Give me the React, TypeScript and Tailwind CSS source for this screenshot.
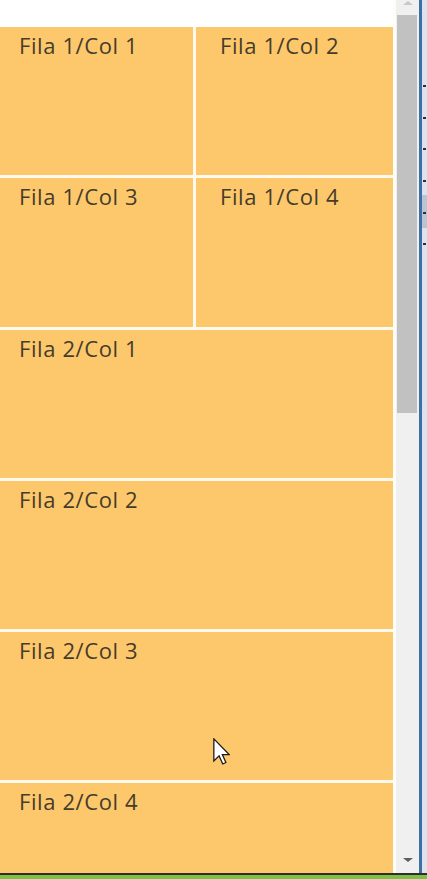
const cells = [
  { label: "Fila 1/Col 1", span: false, first: true },
  { label: "Fila 1/Col 2", span: false, first: false },
  { label: "Fila 1/Col 3", span: false, first: true },
  { label: "Fila 1/Col 4", span: false, first: false },
  { label: "Fila 2/Col 1", span: true, first: true },
  { label: "Fila 2/Col 2", span: true, first: true },
  { label: "Fila 2/Col 3", span: true, first: true },
  { label: "Fila 2/Col 4", span: true, first: true },
];

const ticks = [85, 117, 148, 180, 212, 243];

function Cursor() {
  return (
    <svg className="absolute left-[213px] top-[738px]" width="17" height="27" viewBox="0 0 12 19">
      <path
        d="M0.6 0.6 L0.6 16.2 L4.3 12.6 L6.9 18.3 L9.1 17.3 L6.6 11.7 L11.4 11.7 Z"
        fill="#ffffff"
        stroke="#1a1a1a"
        strokeWidth="0.9"
        strokeLinejoin="miter"
      />
    </svg>
  );
}

function Scrollbar() {
  return (
    <div className="flex w-[23px] flex-col bg-[#f0f0f0]">
      <div className="flex h-[15px] justify-center pt-[1px]">
        <div className="h-0 w-0 border-x-[5px] border-b-[4px] border-x-transparent border-b-[#c8c8c8]" />
      </div>
      <div className="ml-[1px] h-[398px] w-[20px] bg-[#c1c1c1]" />
      <div className="flex-1" />
      <div className="flex h-[20px] justify-center pt-[5px]">
        <div className="h-0 w-0 border-x-[5px] border-t-[4px] border-x-transparent border-t-[#5f5f5f]" />
      </div>
    </div>
  );
}

export default function App() {
  return (
    <div className="flex h-[879px] w-[427px] flex-col overflow-hidden bg-white" style={{ fontFamily: '"Open Sans", "Noto Sans", sans-serif' }}>
      <div className="relative flex min-h-0 flex-1">
        <main className="w-[393px] overflow-hidden bg-white pt-[27px]">
          <div className="grid grid-cols-[193px_197px] auto-rows-[148.3px] gap-[3px] bg-[#fff9ee]">
            {cells.map((c) => (
              <div
                key={c.label}
                className={`bg-[#fdc86b] pt-[3px] text-[22px] leading-[30px] tracking-[0.6px] text-[#463c2c] ${c.span ? "col-span-2" : ""} ${c.first ? "pl-[19px]" : "pl-[24px]"}`}
              >
                {c.label}
              </div>
            ))}
          </div>
        </main>
        <div className="w-[3px] bg-[#fffdf8]" />
        <Scrollbar />
        <div className="w-[2.5px] bg-[#3f6fa3]" />
        <div className="relative flex-1 bg-[#dce3ec]">
          <div className="absolute left-0 top-[195px] h-[33px] w-full bg-[#b9c5d3]" />
          {ticks.map((t) => (
            <div key={t} className="absolute left-[1px] h-[2px] w-[3px] bg-[#2f2f2f]" style={{ top: t }} />
          ))}
        </div>
        <Cursor />
      </div>
      <div className="h-[2px] bg-[#2e2e2e]" />
      <div className="h-[4px] bg-[#7dc043]" />
    </div>
  );
}
